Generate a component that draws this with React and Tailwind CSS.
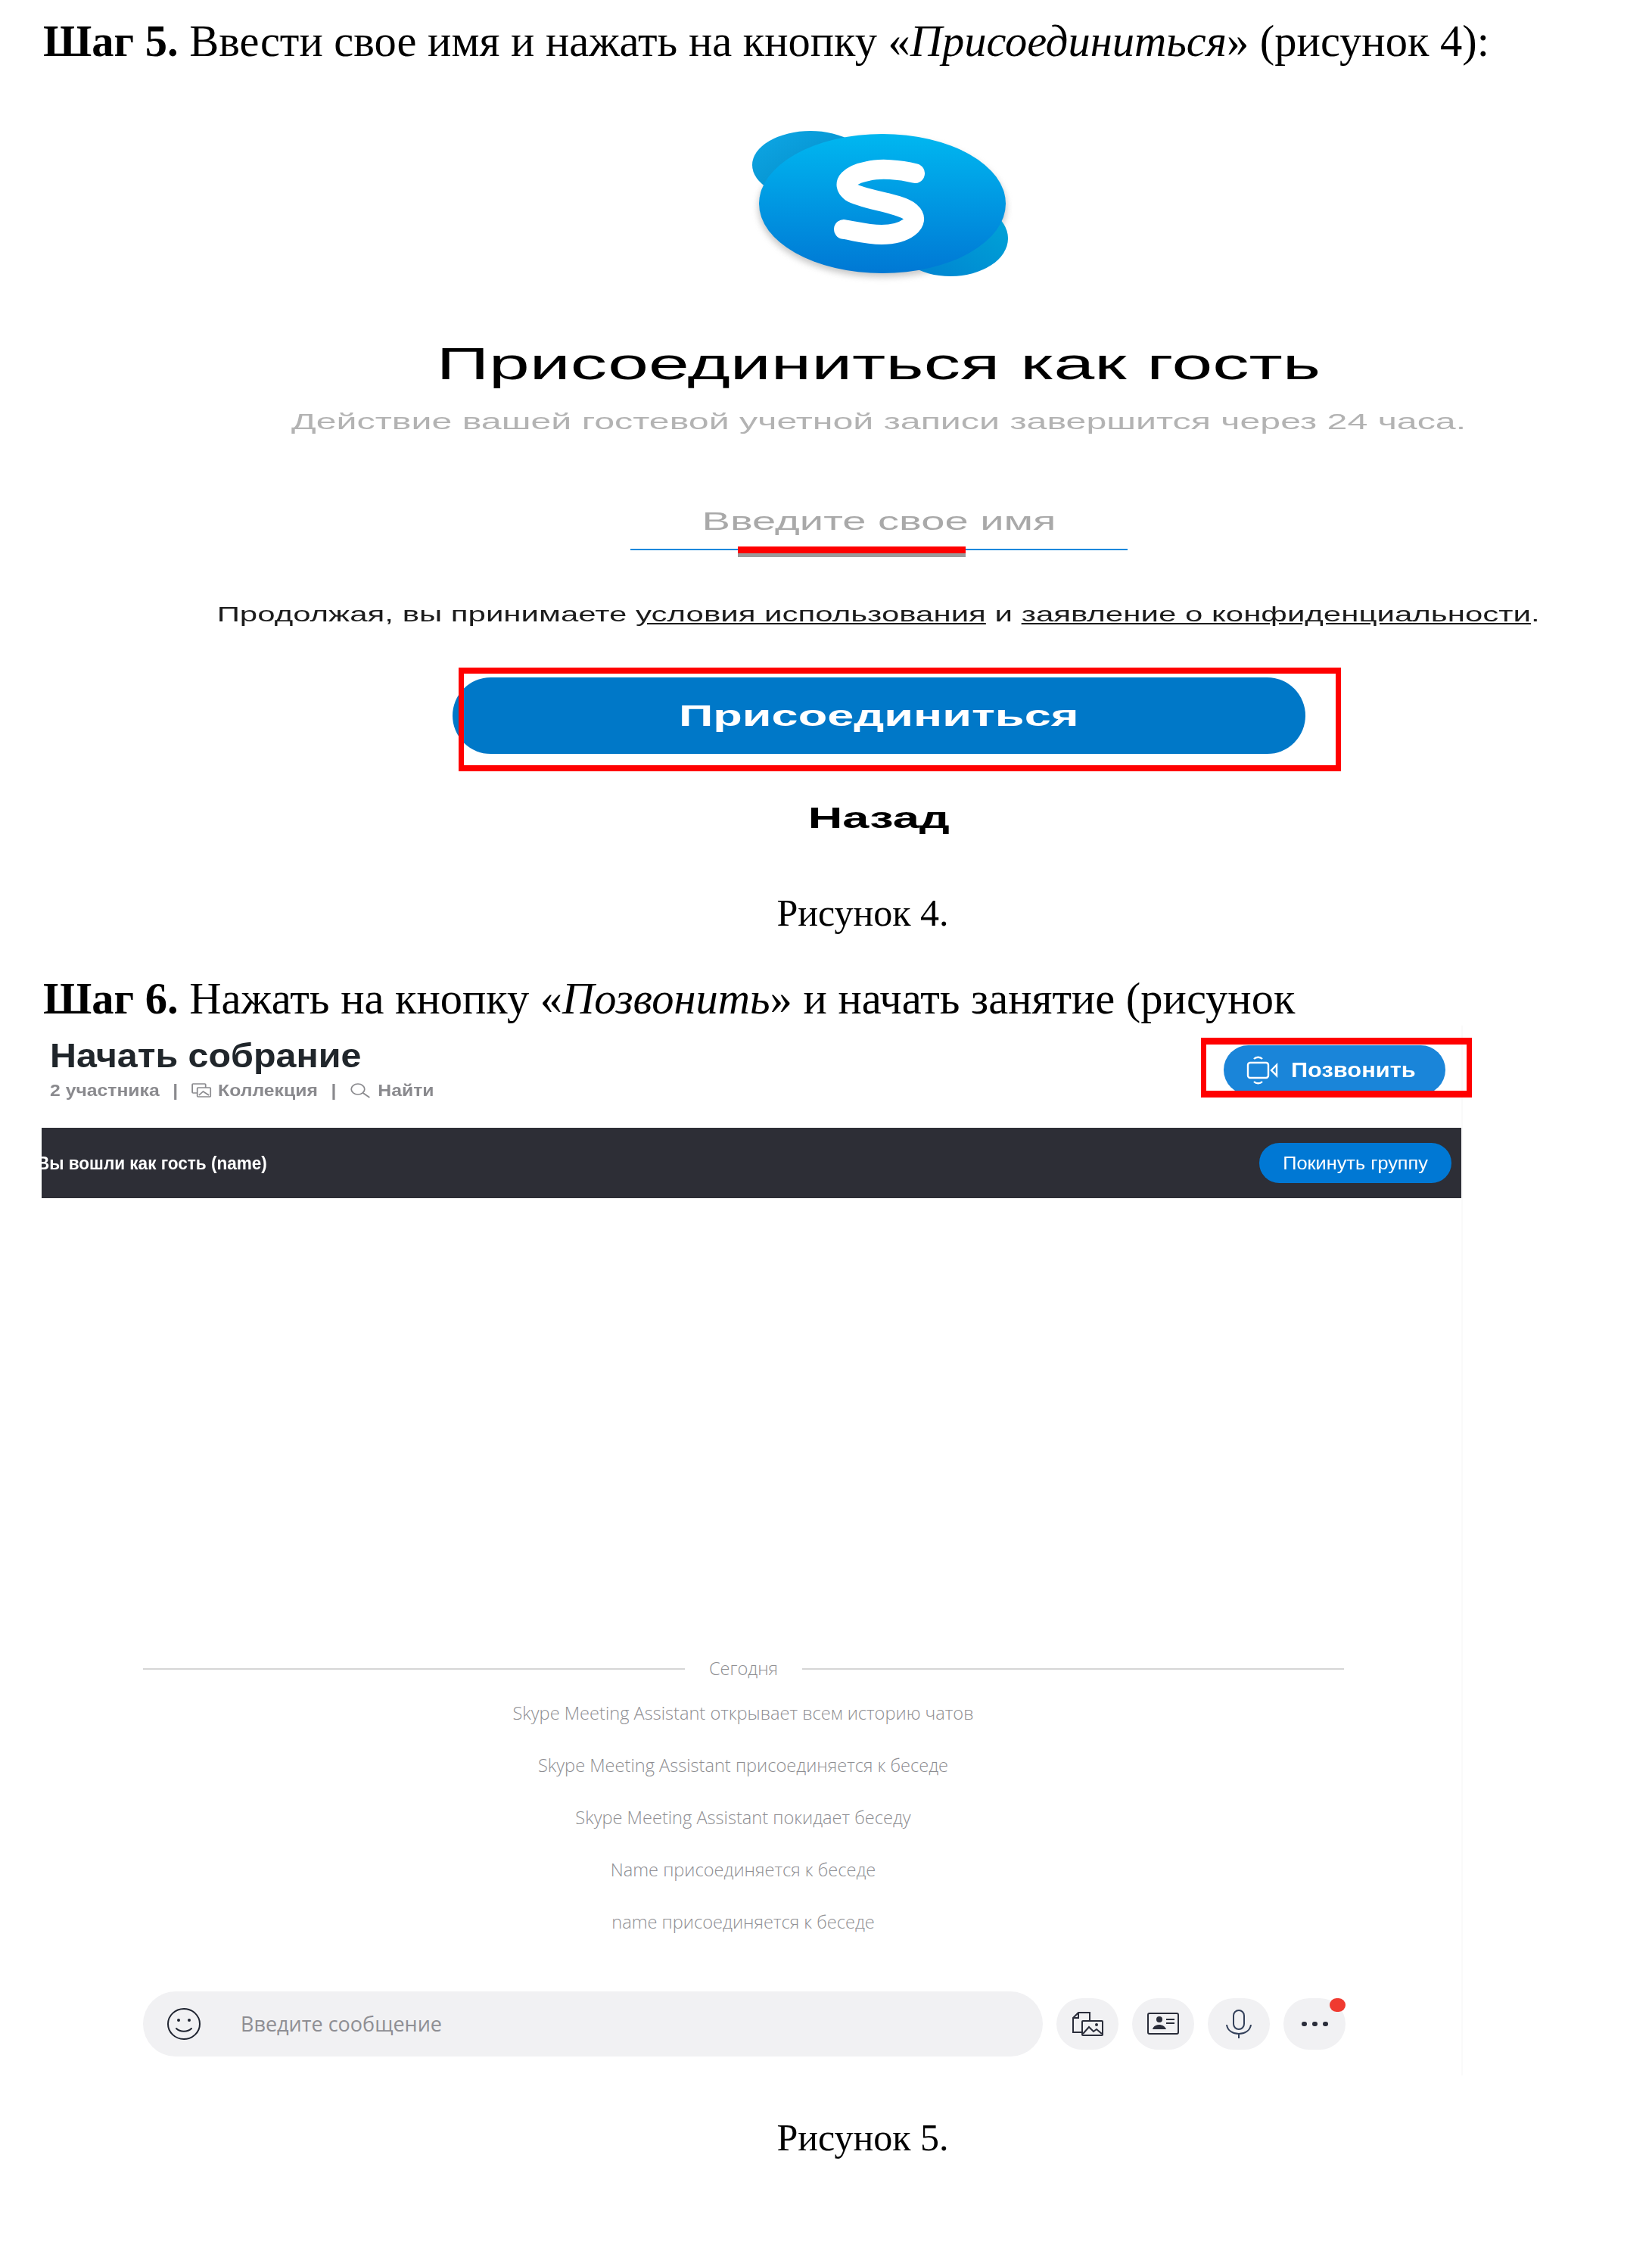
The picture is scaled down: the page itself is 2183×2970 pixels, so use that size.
import React from 'react'

const serif = 'font-["Liberation_Serif",serif]'

function SkypeLogo() {
  return (
    <svg viewBox="0 0 420 240" className="w-[420px] h-[240px]">
      <defs>
        <linearGradient id="skypeBody" x1="0" y1="0" x2="0" y2="1">
          <stop offset="0" stopColor="#00b7f0" />
          <stop offset="1" stopColor="#0078d4" />
        </linearGradient>
        <linearGradient id="skypeTop" x1="1" y1="1" x2="0" y2="0">
          <stop offset="0" stopColor="#0083bf" />
          <stop offset="1" stopColor="#0ea8e6" />
        </linearGradient>
        <linearGradient id="skypeBottom" x1="0" y1="1" x2="1" y2="0">
          <stop offset="0" stopColor="#0080d0" />
          <stop offset="1" stopColor="#00a8d8" />
        </linearGradient>
        <filter id="skypeShadow" x="-20%" y="-20%" width="140%" height="140%">
          <feGaussianBlur stdDeviation="4" />
        </filter>
      </defs>
      <ellipse cx="215" cy="124" rx="164" ry="92" fill="#9a9a9a" opacity="0.55" filter="url(#skypeShadow)" />
      <ellipse cx="120" cy="68" rx="77" ry="45" fill="url(#skypeTop)" />
      <ellipse cx="305" cy="165" rx="76" ry="50" fill="url(#skypeBottom)" />
      <ellipse cx="215" cy="119" rx="163" ry="92" fill="url(#skypeBody)" />
      <path
        d="M258 79 C238 74 212 72 196 76 C174 80 158 92 174 104 C190 114 238 118 252 130 C268 144 244 160 214 160 C194 160 178 155 164 153"
        fill="none"
        stroke="#ffffff"
        strokeWidth="26"
        strokeLinecap="round"
      />
    </svg>
  )
}

function Smiley() {
  return (
    <svg viewBox="0 0 44 44" className="w-[44px] h-[44px]" fill="none" stroke="#1f2430" strokeWidth="2">
      <ellipse cx="22" cy="22" rx="21" ry="20" />
      <circle cx="15" cy="17" r="2" fill="#1f2430" stroke="none" />
      <circle cx="29" cy="17" r="2" fill="#1f2430" stroke="none" />
      <path d="M12 28 C17 33 27 33 32 28" strokeLinecap="round" />
    </svg>
  )
}

function FileIcon() {
  return (
    <svg viewBox="0 0 42 32" className="w-[42px] h-[32px]" fill="none" stroke="#2a2d3a" strokeWidth="2">
      <path d="M13 27 H2 V8 L9 1 H24 V11" />
      <path d="M2 8 H9 V1" />
      <rect x="14" y="12" width="27" height="19" rx="1" />
      <path d="M15 29 L23 20 L29 26 L33 23 L40 29" />
      <circle cx="33" cy="17" r="2" fill="#2a2d3a" stroke="none" />
    </svg>
  )
}

function ContactIcon() {
  return (
    <svg viewBox="0 0 42 30" className="w-[42px] h-[30px]" fill="none" stroke="#2a2d3a" strokeWidth="2">
      <rect x="1" y="1" width="40" height="27" rx="2" />
      <circle cx="16" cy="9" r="4" fill="#2a2d3a" stroke="none" />
      <path d="M7 22 C9 14 22 14 25 22 Z" fill="#2a2d3a" stroke="none" />
      <path d="M25 9 H36 M25 14 H36" />
    </svg>
  )
}

function MicIcon() {
  return (
    <svg viewBox="0 0 34 38" className="w-[34px] h-[38px]" fill="none" stroke="#33405a" strokeWidth="2">
      <rect x="10" y="1" width="14" height="25" rx="7" />
      <path d="M1 20 C3 36 31 36 33 20 M17 32 V38" />
    </svg>
  )
}

function CallIcon() {
  return (
    <svg viewBox="0 0 42 38" className="w-[42px] h-[38px]" fill="none" stroke="#ffffff" strokeWidth="2.4">
      <rect x="2" y="9" width="27" height="20" rx="3" />
      <path d="M33 19 L40 12 V26 Z" />
      <path d="M10 4 C13 1 18 1 21 4 M10 34 C13 37 18 37 21 34" />
    </svg>
  )
}

function CollectionIcon() {
  return (
    <svg viewBox="0 0 24 20" className="w-[24px] h-[20px]" fill="none" stroke="#8a8a8e" strokeWidth="1.6">
      <rect x="1" y="1" width="16" height="12" rx="1" />
      <rect x="7" y="6" width="16" height="12" rx="1" fill="#ffffff" />
      <path d="M9 16 L14 11 L21 16" />
    </svg>
  )
}

function SearchIcon() {
  return (
    <svg viewBox="0 0 26 20" className="w-[26px] h-[20px]" fill="none" stroke="#8a8a8e" strokeWidth="1.6">
      <ellipse cx="10" cy="8" rx="8" ry="7" />
      <path d="M16 13 L24 19" />
    </svg>
  )
}

const messages = [
  { text: 'Skype Meeting Assistant открывает всем историю чатов' },
  { text: 'Skype Meeting Assistant присоединяется к беседе' },
  { text: 'Skype Meeting Assistant покидает беседу' },
  { text: 'Name присоединяется к беседе' },
  { text: 'name присоединяется к беседе' },
]

export default function App() {
  return (
    <div className="w-[2183px] h-[2970px] bg-white overflow-hidden pt-[20px] text-black">
      {/* Step 5 */}
      <p className={`${serif} text-[58.5px] leading-[70px] h-[70px] pl-[57px] whitespace-nowrap`}>
        <b>Шаг 5.</b> Ввести свое имя и нажать на кнопку «<i>Присоединиться</i>» (рисунок 4):
      </p>

      <div className='ml-[139px] flex flex-col items-center font-["Liberation_Sans",sans-serif]'>
        <div className="mt-[60px]">
          <SkypeLogo />
        </div>

        <h1 className="mt-[51px] h-[80px] flex items-center text-[60px] whitespace-nowrap scale-x-[1.61]">
          Присоединиться как гость
        </h1>
        <p className="mt-[10px] h-[50px] flex items-center text-[30px] text-[#b3b3b3] whitespace-nowrap scale-x-[1.61]">
          Действие вашей гостевой учетной записи завершится через 24 часа.
        </p>

        <div className="relative mt-[83px] h-[63px] w-[657px] border-b-2 border-[#1488dc]">
          <div className="h-[50px] flex items-center justify-center text-[33px] text-[#a9a9a9] whitespace-nowrap scale-x-[1.7]">
            Введите свое имя
          </div>
          <div className="absolute left-[142px] top-[58px] w-[301px] h-[9px] bg-[#ff0000]" />
          <div className="absolute left-[142px] top-[67px] w-[301px] h-[5px] bg-[#9b9b9b]" />
        </div>

        <p className="mt-[60px] h-[50px] text-[28px] leading-[50px] text-[#1c1c1c] whitespace-nowrap scale-x-[1.5]">
          Продолжая, вы принимаете <span className="underline">условия использования</span> и{' '}
          <span className="underline">заявление о конфиденциальности</span>.
        </p>

        <div className="relative mt-[58px] w-[1127px] h-[101px]">
          <button className="w-full h-full rounded-full bg-[#0078c8] text-white text-[38px] font-bold pt-[2px]">
            <span className="inline-block scale-x-[1.66]">Присоединиться</span>
          </button>
          <div className="absolute left-[8px] -right-[47px] -top-[13px] -bottom-[23px] border-x-[7px] border-y-[8px] border-[#ff0000]" />
        </div>

        <p className="mt-[60px] h-[50px] flex items-center text-[38px] font-bold whitespace-nowrap scale-x-[1.66]">Назад</p>
      </div>

      <p className={`${serif} mt-[70px] h-[60px] leading-[60px] text-[50px] pl-[97px] text-center`}>Рисунок 4.</p>

      {/* Step 6 */}
      <p className={`${serif} mt-[49px] text-[58.5px] leading-[70px] h-[70px] pl-[57px] whitespace-nowrap`}>
        <b>Шаг 6.</b> Нажать на кнопку «<i>Позвонить</i>» и начать занятие (рисунок
      </p>

      <section className='ml-[55px] w-[1878px] border-r-2 border-[#fafafa] font-["Liberation_Sans",sans-serif]'>
        <header className="h-[135px] flex justify-between">
          <div className="pl-[11px]">
            <h2 className="mt-[16px] h-[48px] flex items-center text-[44px] font-bold text-[#20262b] whitespace-nowrap origin-left scale-x-[1.1]">
              Начать собрание
            </h2>
            <div className="mt-[2px] h-[40px] flex items-center gap-[16px] text-[22.5px] font-bold text-[#8a8a8e] whitespace-nowrap origin-left scale-x-[1.1]">
              <span>2 участника</span>
              <span>|</span>
              <div className="flex items-center gap-[8px]">
                <CollectionIcon />
                <span>Коллекция</span>
              </div>
              <span>|</span>
              <div className="flex items-center gap-[8px]">
                <SearchIcon />
                <span>Найти</span>
              </div>
            </div>
          </div>
          <div className="relative mt-[26px] mr-[21px] w-[293px] h-[65px]">
            <button className="w-full h-full rounded-full bg-[#1a85d9] text-white text-[27px] font-bold flex items-center pl-[30px] gap-[17px]">
              <CallIcon />
              <span className="inline-block origin-left scale-x-[1.14] whitespace-nowrap pt-[2px]">Позвонить</span>
            </button>
            <div className="absolute -left-[30px] -right-[35px] -top-[10px] -bottom-[4px] border-x-[7px] border-y-[9px] border-[#ff0000]" />
          </div>
        </header>

        <div className="h-[93px] bg-[#2d2e36] flex items-center justify-between overflow-hidden pr-[13px]">
          <span className="-ml-[6px] pt-[2px] text-[23px] font-bold text-white whitespace-nowrap origin-left scale-x-[0.98]">
            Вы вошли как гость (name)
          </span>
          <button className="w-[254px] h-[53px] rounded-full bg-[#0078d4] text-white text-[23px] pt-[2px]">
            <span className="inline-block scale-x-[1.1] whitespace-nowrap">Покинуть группу</span>
          </button>
        </div>

        <div className='pt-[602px] font-["Open_Sans",sans-serif] text-[23.6px] font-light text-[#8e8e92]'>
          <div className="h-[40px] flex items-center pl-[134px]">
            <div className="w-[716px] h-[2px] bg-[#d6d6d6]" />
            <div className="w-[155px] text-center">Сегодня</div>
            <div className="w-[716px] h-[2px] bg-[#d6d6d6]" />
          </div>
          <div className="mt-[4px] flex flex-col items-center w-[1854px]">
            {messages.map((m) => (
              <div key={m.text} className="h-[69px] flex items-center whitespace-nowrap">
                {m.text}
              </div>
            ))}
          </div>

          <div className="mt-[57px] pb-[25px] pl-[134px] flex items-center gap-[18px]">
            <div className="w-[1189px] h-[86px] rounded-full bg-[#f1f1f3] flex items-center pl-[32px]">
              <Smiley />
              <span className="ml-[53px] text-[27px] font-normal text-[#8e8e93]">Введите сообщение</span>
            </div>
            <div className="w-[82px] h-[68px] rounded-full bg-[#f1f1f3] flex items-center justify-center">
              <FileIcon />
            </div>
            <div className="w-[82px] h-[68px] rounded-full bg-[#f1f1f3] flex items-center justify-center">
              <ContactIcon />
            </div>
            <div className="w-[82px] h-[68px] rounded-full bg-[#f1f1f3] flex items-center justify-center">
              <MicIcon />
            </div>
            <div className="relative w-[82px] h-[68px] rounded-full bg-[#f1f1f3] flex items-center justify-center gap-[7px]">
              <span className="w-[7px] h-[6px] rounded-full bg-[#2a2d3a]" />
              <span className="w-[7px] h-[6px] rounded-full bg-[#2a2d3a]" />
              <span className="w-[7px] h-[6px] rounded-full bg-[#2a2d3a]" />
              <span className="absolute left-[61px] top-0 w-[21px] h-[18px] rounded-full bg-[#f03a30]" />
            </div>
          </div>
        </div>
      </section>

      <p className={`${serif} mt-[52px] h-[60px] leading-[60px] text-[50px] pl-[97px] text-center`}>Рисунок 5.</p>
    </div>
  )
}
